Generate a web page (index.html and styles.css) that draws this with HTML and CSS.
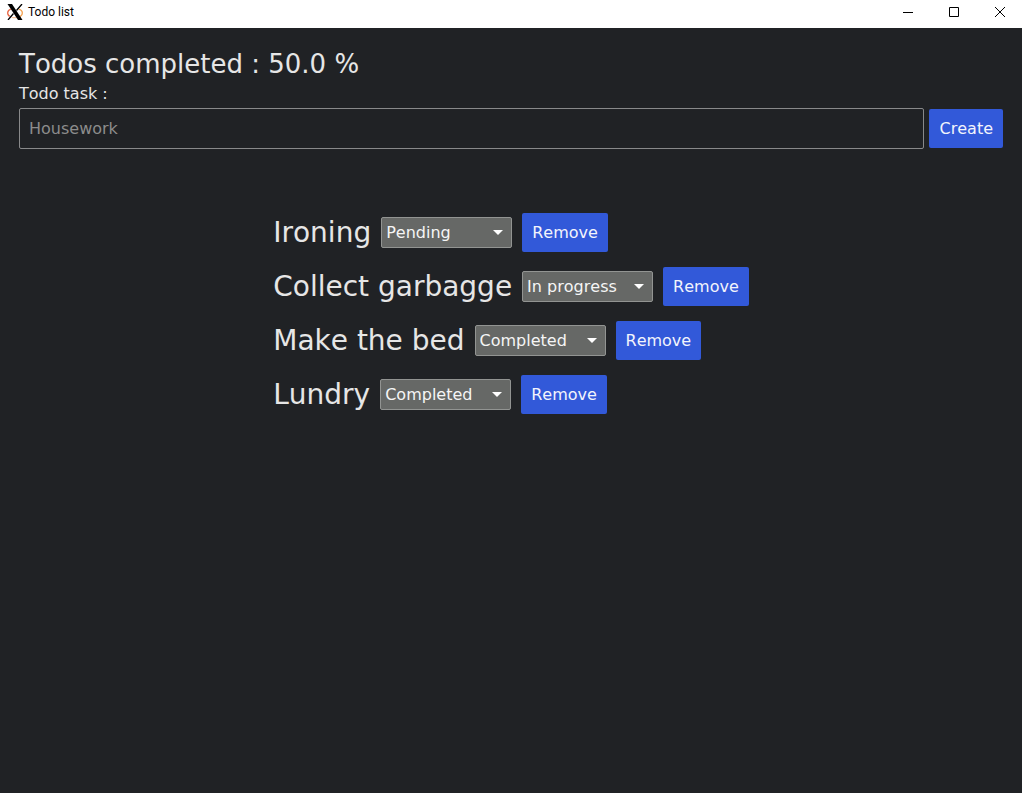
FILE: index.html
```html
<!DOCTYPE html>
<html lang="en">
<head>
<meta charset="utf-8">
<title>Todo list</title>
<link rel="stylesheet" href="styles.css">
</head>
<body>
<header class="titlebar">
  <svg class="logo" width="16" height="16" viewBox="0 0 16 16" aria-hidden="true">
    <path d="M4 5C-1 7 0 12 4.500 13.200" fill="none" stroke="#e86a48" stroke-width="1.300"/>
    <path d="M11 4.800C17 6 16.500 12 11 13.200" fill="none" stroke="#f4a04c" stroke-width="1.300"/>
    <path d="M4.500 13.200C7 14 9 13.800 11 13.200" fill="none" stroke="#f6c39c" stroke-width="1.200"/>
    <path d="M14.500 0.500L1.500 15.500" stroke="#fff" stroke-width="2.200"/>
    <path d="M15 0L9.500 6.500M6.500 9.500L1 16" stroke="#000" stroke-width="1.300"/>
    <path d="M0.500 0H5L15.500 16H11Z" fill="#000"/>
  </svg>
  <span class="title">Todo list</span>
  <span class="winbtns">
    <button class="winbtn" type="button" aria-label="Minimize"><svg width="10" height="10" viewBox="0 0 10 10"><path d="M0 5.500H10"/></svg></button>
    <button class="winbtn" type="button" aria-label="Maximize"><svg width="10" height="10" viewBox="0 0 10 10"><path d="M.5 .5H9.500V9.500H.5Z"/></svg></button>
    <button class="winbtn" type="button" aria-label="Close"><svg width="10" height="10" viewBox="0 0 10 10"><path d="M0 0L10 10M10 0L0 10"/></svg></button>
  </span>
</header>
<main class="content">
  <h1 class="summary">Todos completed : 50.0 %</h1>
  <form class="form">
    <label class="form-label" for="task">Todo task :</label>
    <div class="form-row">
      <input class="field" id="task" type="text" placeholder="Housework">
      <button class="btn" type="button">Create</button>
    </div>
  </form>
  <ul class="todos">
    <li class="todo">
      <label class="name" for="s1">Ironing</label>
      <span class="picker"><select class="select" id="s1"><option selected>Pending</option><option>In progress</option><option>Completed</option></select><svg class="caret" width="10" height="5" viewBox="0 0 10 5"><path d="M0 0H10L5 5Z"/></svg></span>
      <button class="btn" type="button">Remove</button>
    </li>
    <li class="todo">
      <label class="name" for="s2">Collect garbagge</label>
      <span class="picker"><select class="select" id="s2"><option>Pending</option><option selected>In progress</option><option>Completed</option></select><svg class="caret" width="10" height="5" viewBox="0 0 10 5"><path d="M0 0H10L5 5Z"/></svg></span>
      <button class="btn" type="button">Remove</button>
    </li>
    <li class="todo">
      <label class="name" for="s3">Make the bed</label>
      <span class="picker"><select class="select" id="s3"><option>Pending</option><option>In progress</option><option selected>Completed</option></select><svg class="caret" width="10" height="5" viewBox="0 0 10 5"><path d="M0 0H10L5 5Z"/></svg></span>
      <button class="btn" type="button">Remove</button>
    </li>
    <li class="todo">
      <label class="name" for="s4">Lundry</label>
      <span class="picker"><select class="select" id="s4"><option>Pending</option><option>In progress</option><option selected>Completed</option></select><svg class="caret" width="10" height="5" viewBox="0 0 10 5"><path d="M0 0H10L5 5Z"/></svg></span>
      <button class="btn" type="button">Remove</button>
    </li>
  </ul>
</main>
</body>
</html>
```

FILE: styles.css
```css
* {
  box-sizing: border-box;
}

body {
  margin: 0;
  min-height: 100vh;
  background: #202225;
  color: #e6e6e6;
  font: 16px/20px "DejaVu Sans", sans-serif;
  font-kerning: none;
}

button,
input,
select {
  font: inherit;
}

.titlebar {
  display: flex;
  align-items: center;
  height: 28px;
  padding: 0 0 4px 7px;
  background: #fff;
  color: #000;
}

.title {
  flex: 1;
  margin-left: 5px;
  font: 12px/16px Roboto, sans-serif;
}

.winbtns {
  display: flex;
  gap: 1px;
}

.winbtn {
  display: flex;
  align-items: center;
  justify-content: center;
  width: 45px;
  height: 24px;
  padding: 0;
  border: 0;
  background: none;
}

.winbtn svg {
  fill: none;
  stroke: #000;
  stroke-width: 1;
}

.content {
  padding: 20px 19px;
}

.summary {
  margin: 0;
  font-size: 26px;
  font-weight: 400;
  line-height: 32px;
}

.form-label {
  display: block;
  padding: 4px 0;
}

.form-row {
  display: flex;
  align-items: center;
  gap: 5px;
}

.field {
  flex: 1;
  min-width: 0;
  height: 41px;
  padding: 0 9px;
  border: 1px solid #88898a;
  border-radius: 2px;
  background: none;
  color: #e6e6e6;
}

.field::placeholder {
  color: #8c8c8c;
  opacity: 1;
}

.btn {
  height: 39px;
  padding: 0 10px;
  border: 0;
  border-radius: 2px;
  background: #3259d9;
  color: #f2f4fc;
}

.todos {
  display: flex;
  flex-direction: column;
  gap: 15px;
  width: fit-content;
  margin: 64px auto 0;
  padding: 0;
  list-style: none;
}

.todo {
  display: flex;
  align-items: center;
  gap: 10px;
}

.name {
  font-size: 28px;
  line-height: 36px;
}

.picker {
  position: relative;
  display: flex;
}

.select {
  appearance: none;
  width: 131px;
  height: 31px;
  padding: 0 24px 0 4px;
  border: 1px solid #929492;
  border-radius: 2px;
  background: #666866;
  color: #f5f5f5;
}

.caret {
  position: absolute;
  right: 9px;
  top: 13px;
  fill: #fff;
  pointer-events: none;
}
```
